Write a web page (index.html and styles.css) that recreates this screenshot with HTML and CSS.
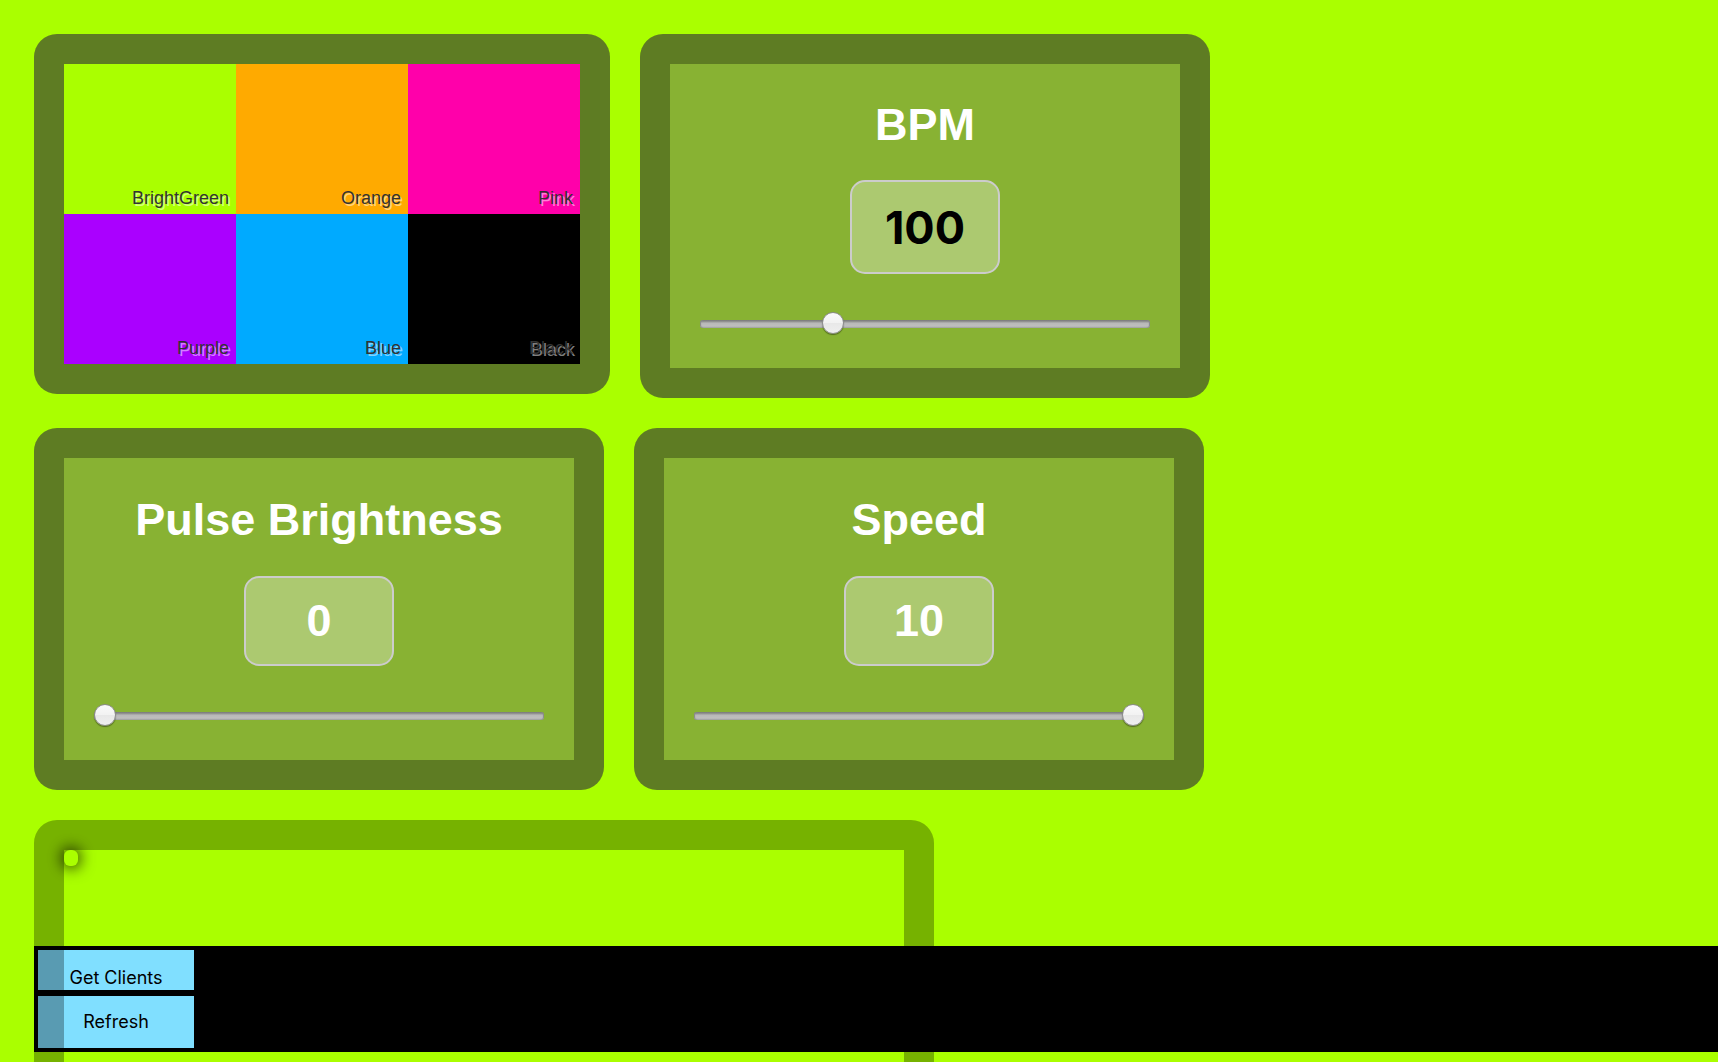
FILE: index.html
```html
<!DOCTYPE html>
<html lang="en">
<head>
<meta charset="utf-8">
<meta name="viewport" content="width=device-width, initial-scale=1">
<title>Light Controls</title>
<link rel="stylesheet" href="styles.css">
</head>
<body>
<main class="board">
  <section class="panel swatches" aria-label="Colors">
    <button class="swatch bright-green" type="button">BrightGreen</button>
    <button class="swatch orange" type="button">Orange</button>
    <button class="swatch pink" type="button">Pink</button>
    <button class="swatch purple" type="button">Purple</button>
    <button class="swatch blue" type="button">Blue</button>
    <button class="swatch black" type="button">Black</button>
  </section>

  <section class="panel control control-bpm">
    <h1 class="title"><label for="bpm">BPM</label></h1>
    <input class="value value-input" id="bpm" type="text" inputmode="numeric" value="100">
    <input class="slider" type="range" min="60" max="200" value="100" aria-label="BPM slider">
  </section>

  <section class="panel control">
    <h1 class="title"><label for="brightness">Pulse Brightness</label></h1>
    <output class="value" for="brightness">0</output>
    <input class="slider" id="brightness" type="range" min="0" max="100" value="0">
  </section>

  <section class="panel control">
    <h1 class="title"><label for="speed">Speed</label></h1>
    <output class="value" for="speed">10</output>
    <input class="slider" id="speed" type="range" min="1" max="10" value="10">
  </section>

  <section class="panel stage" aria-label="Clients">
    <div class="client"></div>
  </section>
</main>

<nav class="toolbar">
  <button class="action action-short" type="button">Get Clients</button>
  <button class="action" type="button">Refresh</button>
</nav>
</body>
</html>
```

FILE: styles.css
```css
*,
*::before,
*::after {
  box-sizing: border-box;
}

html {
  background: #aaff00;
  scrollbar-width: none;
}

body {
  margin: 0;
  font-family: "Liberation Sans", Arial, sans-serif;
}

.board {
  display: flex;
  flex-wrap: wrap;
  align-items: flex-start;
  gap: 30px;
  padding: 34px;
}

.panel {
  border: 30px solid rgba(0, 0, 0, 0.3);
  border-radius: 23px;
  background-color: rgba(102, 102, 102, 0.5);
}

/* Color picker */

.swatches {
  display: grid;
  grid-template-columns: repeat(3, 172px);
  grid-auto-rows: 150px;
}

.swatch {
  display: flex;
  align-items: flex-end;
  justify-content: flex-end;
  margin: 0;
  padding: 6px 7px;
  border: 0;
  color: #333;
  font-family: inherit;
  font-size: 18px;
  line-height: 20px;
  text-shadow: 2px 2px 0 rgba(255, 255, 255, 0.5);
}

.bright-green { background: #aaff00; }
.orange { background: #ffaa00; }
.pink { background: #ff00aa; }
.purple { background: #aa00ff; }
.blue { background: #00aaff; }
.black { background: #000; }

/* Value controls */

.control {
  display: flex;
  flex-direction: column;
  align-items: center;
  width: 570px;
  max-width: 100%;
  padding: 33px 30px;
}

.title {
  margin: 0 0 27px;
  color: #fff;
  font-size: 45px;
  font-weight: bold;
  line-height: 58px;
}

.control-bpm .title {
  line-height: 56px;
}

.value {
  width: 150px;
  height: 90px;
  margin: 0 0 39px;
  padding: 0;
  border: 2px solid #ccc;
  border-radius: 15px;
  background: rgba(255, 255, 255, 0.3);
  color: #fff;
  font-size: 45px;
  font-weight: bold;
  line-height: 86px;
  text-align: center;
}

.value-input {
  height: 94px;
  color: #000;
  font-family: Inter, sans-serif;
}

.slider {
  -webkit-appearance: none;
  appearance: none;
  width: 100%;
  height: 22px;
  margin: 0;
  background: transparent;
}

.slider::-webkit-slider-runnable-track {
  height: 8px;
  border-radius: 3px;
  background: linear-gradient(#777 0, #999 2px, #b8b8b8 3px, #bebebe 6px, #a9a9a9 8px);
  box-shadow: inset 1px 0 1px #888, inset -1px 0 1px #888;
}

.slider::-webkit-slider-thumb {
  -webkit-appearance: none;
  width: 22px;
  height: 22px;
  margin-top: -8px;
  border: 1px solid #8c8c8c;
  border-radius: 50%;
  background: linear-gradient(#fafafa 0, #f2f2f2 50%, #e8e8e8 51%, #efefef 100%);
  box-shadow: 0 1px 1px rgba(0, 0, 0, 0.4);
}

/* Client stage: drawn above the toolbar, lets clicks through */

.stage {
  position: relative;
  z-index: 2;
  width: 900px;
  max-width: 100%;
  height: 660px;
  background: none;
  pointer-events: none;
}

.client {
  width: 14px;
  height: 16px;
  border-radius: 6px;
  box-shadow: 0 0 15px 2px rgba(0, 0, 0, 0.8);
}

/* Toolbar */

.toolbar {
  position: fixed;
  z-index: 1;
  right: 0;
  bottom: 10px;
  left: 34px;
  display: flex;
  flex-direction: column;
  align-items: flex-start;
  gap: 6px;
  padding: 4px;
  background: #000;
}

.action {
  width: 156px;
  height: 52px;
  margin: 0;
  padding: 0;
  border: 0;
  background: #80dfff;
  color: #000;
  font-family: Inter, sans-serif;
  font-size: 18px;
  line-height: 22px;
}

.action-short {
  height: 40px;
  padding-top: 16px;
}
```
